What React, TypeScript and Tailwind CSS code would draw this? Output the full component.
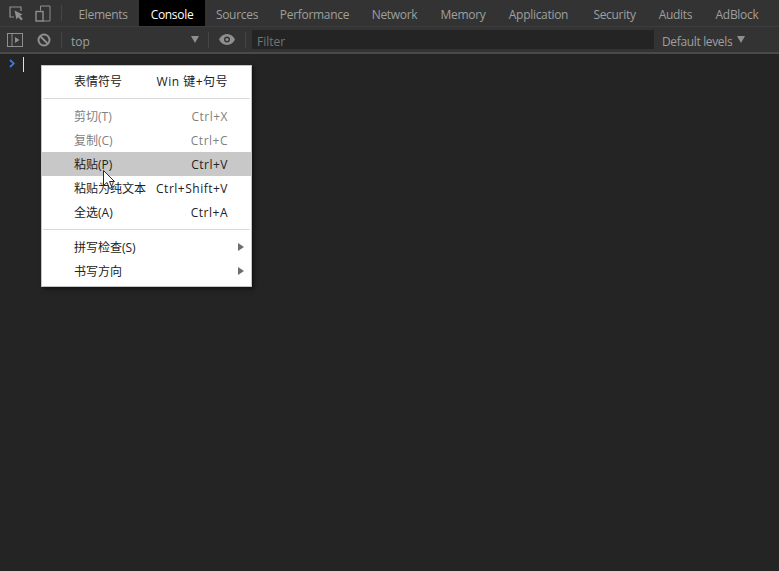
import React from 'react'

const tabs = [
  { name: 'Elements', width: 'w-[72px]' },
  { name: 'Console', width: 'w-[66px]' },
  { name: 'Sources', width: 'w-[64px]' },
  { name: 'Performance', width: 'w-[91px]' },
  { name: 'Network', width: 'w-[69px]' },
  { name: 'Memory', width: 'w-[68px]' },
  { name: 'Application', width: 'w-[83px]' },
  { name: 'Security', width: 'w-[69px]' },
  { name: 'Audits', width: 'w-[53px]' },
  { name: 'AdBlock', width: 'w-[70px]' },
]

interface MenuRow {
  label: string
  shortcut?: string
  disabled?: boolean
  active?: boolean
  submenu?: boolean
}

const firstGroup: MenuRow[] = [{ label: '表情符号', shortcut: 'Win 键+句号' }]
const secondGroup: MenuRow[] = [
  { label: '剪切(T)', shortcut: 'Ctrl+X', disabled: true },
  { label: '复制(C)', shortcut: 'Ctrl+C', disabled: true },
  { label: '粘贴(P)', shortcut: 'Ctrl+V', active: true },
  { label: '粘贴为纯文本', shortcut: 'Ctrl+Shift+V' },
  { label: '全选(A)', shortcut: 'Ctrl+A' },
]
const thirdGroup: MenuRow[] = [
  { label: '拼写检查(S)', submenu: true },
  { label: '书写方向', submenu: true },
]

function Row({ row }: { row: MenuRow }) {
  return (
    <div
      className={`relative flex h-6 items-center justify-between pl-[32px] pr-[23px] pt-[2px] ${
        row.active ? 'bg-[#c8c8c8]' : ''
      } ${row.disabled ? 'text-[#7f7f7f]' : 'text-[#222222]'}`}
    >
      <span>{row.label}</span>
      {row.shortcut && <span className="tracking-[0.5px]">{row.shortcut}</span>}
      {row.submenu && (
        <svg className="absolute right-[7px] top-[8px]" width="6" height="8" viewBox="0 0 6 8">
          <path d="M0 0L6 4L0 8Z" fill="#6e6e6e" />
        </svg>
      )}
    </div>
  )
}

function Divider() {
  return <div className="mx-[1px] my-[5px] h-px bg-[#dadada]" />
}

export default function App() {
  return (
    <div
      className="relative flex h-[571px] w-[779px] flex-col overflow-hidden bg-[#242424] text-[12px] text-[#9f9f9f]"
      style={{ fontFamily: '"Open Sans", "Noto Sans CJK SC", sans-serif' }}
    >
      {/* Tab bar */}
      <div className="flex h-[27px] items-center border-b border-[#3d3d3d] bg-[#333333]">
        <div className="flex w-[62px] items-center pl-[8px]">
          <svg width="17" height="17" viewBox="0 0 17 17" fill="none">
            <path d="M6 12H2V2H13V6" stroke="#8f8f8f" strokeWidth="1.2" />
            <path d="M6.5 5.5L8.5 14.5L10.4 12.2L13.2 15.4L14.8 14L12 10.8L14.6 9.4Z" fill="#8f8f8f" />
          </svg>
          <svg className="ml-[10px]" width="16" height="17" viewBox="0 0 16 17" fill="none">
            <path d="M5.5 5.5V1H15V16H8" stroke="#8f8f8f" strokeWidth="1" />
            <rect x="1" y="6.5" width="7" height="9.5" fill="#333333" stroke="#8f8f8f" strokeWidth="1.4" />
          </svg>
          <div className="ml-[10px] h-4 w-px bg-[#454545]" />
        </div>
        <div className="ml-[5px] flex h-full items-center">
          {tabs.map(tab => (
            <div
              key={tab.name}
              className={`flex h-full items-center justify-center pt-[4px] tracking-[-0.3px] ${tab.width} ${
                tab.name === 'Console' ? 'bg-black text-white' : 'text-[#9f9f9f]'
              }`}
            >
              {tab.name}
            </div>
          ))}
        </div>
      </div>

      {/* Console toolbar */}
      <div className="flex h-[27px] items-center border-b-2 border-[#4a4a4a] bg-[#333333]">
        <svg className="ml-[7px]" width="16" height="14" viewBox="0 0 16 14" fill="none">
          <rect x="0.5" y="0.5" width="15" height="13" stroke="#8f8f8f" />
          <path d="M5 1V13" stroke="#8f8f8f" />
          <path d="M8 4L12.5 7L8 10Z" fill="#8f8f8f" />
        </svg>
        <svg className="ml-[14px]" width="14" height="14" viewBox="0 0 14 14" fill="none">
          <circle cx="7" cy="7" r="5.5" stroke="#8f8f8f" strokeWidth="2" />
          <path d="M3 3L11 11" stroke="#8f8f8f" strokeWidth="2" />
        </svg>
        <div className="ml-[10px] h-4 w-px bg-[#454545]" />
        <div className="flex w-[139px] items-center justify-between pl-[9px] pr-[2px]">
          <span className="pt-[4px]">top</span>
          <svg width="8" height="7" viewBox="0 0 8 7">
            <path d="M0 0H8L4 7Z" fill="#8f8f8f" />
          </svg>
        </div>
        <div className="ml-[7px] h-4 w-px bg-[#454545]" />
        <svg className="ml-[10px]" width="16" height="11" viewBox="0 0 16 11">
          <path
            fillRule="evenodd"
            d="M8 0C4.5 0 1.6 2.2 0 5.5C1.6 8.8 4.5 11 8 11C11.5 11 14.4 8.8 16 5.5C14.4 2.2 11.5 0 8 0ZM8 2.5A3 3 0 1 1 8 8.5A3 3 0 1 1 8 2.5Z"
            fill="#8f8f8f"
          />
          <circle cx="8" cy="5.5" r="1.6" fill="#8f8f8f" />
        </svg>
        <div className="ml-[10px] h-4 w-px bg-[#454545]" />
        <div className="ml-[6px] flex h-[19px] w-[402px] items-center bg-[#242424] pl-[5px] pt-[4px] text-[#757575]">Filter</div>
        <div className="ml-[8px] flex items-center gap-[5px]">
          <span className="pt-[4px] tracking-[-0.35px]">Default levels</span>
          <svg width="8" height="7" viewBox="0 0 8 7">
            <path d="M0 0H8L4 7Z" fill="#8f8f8f" />
          </svg>
        </div>
      </div>

      {/* Prompt */}
      <div className="flex items-start pl-[9px] pt-[3px]">
        <svg className="mt-[2px]" width="6" height="9" viewBox="0 0 6 9" fill="none">
          <path d="M1 1L4.8 4.5L1 8" stroke="#2f7fe8" strokeWidth="1.8" />
        </svg>
        <div className="ml-[8px] h-[15px] w-px bg-[#e0e0e0]" />
      </div>

      {/* Context menu */}
      <div className="absolute left-[41px] top-[65px] w-[211px] border border-[#c4c4c4] bg-white py-[3px] text-[12px] shadow-[2px_2px_4px_rgba(0,0,0,0.5)]">
        {firstGroup.map(row => <Row key={row.label} row={row} />)}
        <Divider />
        {secondGroup.map(row => <Row key={row.label} row={row} />)}
        <Divider />
        {thirdGroup.map(row => <Row key={row.label} row={row} />)}
      </div>

      {/* Mouse pointer */}
      <svg className="absolute left-[103px] top-[170px]" width="14" height="20" viewBox="0 0 14 20">
        <path d="M0.5 0.5V15.5L4 12.5L6.5 18.5L9 17.5L6.5 11.5H11.5Z" fill="#ffffff" stroke="#2a2a2a" strokeWidth="1" />
      </svg>
    </div>
  )
}
